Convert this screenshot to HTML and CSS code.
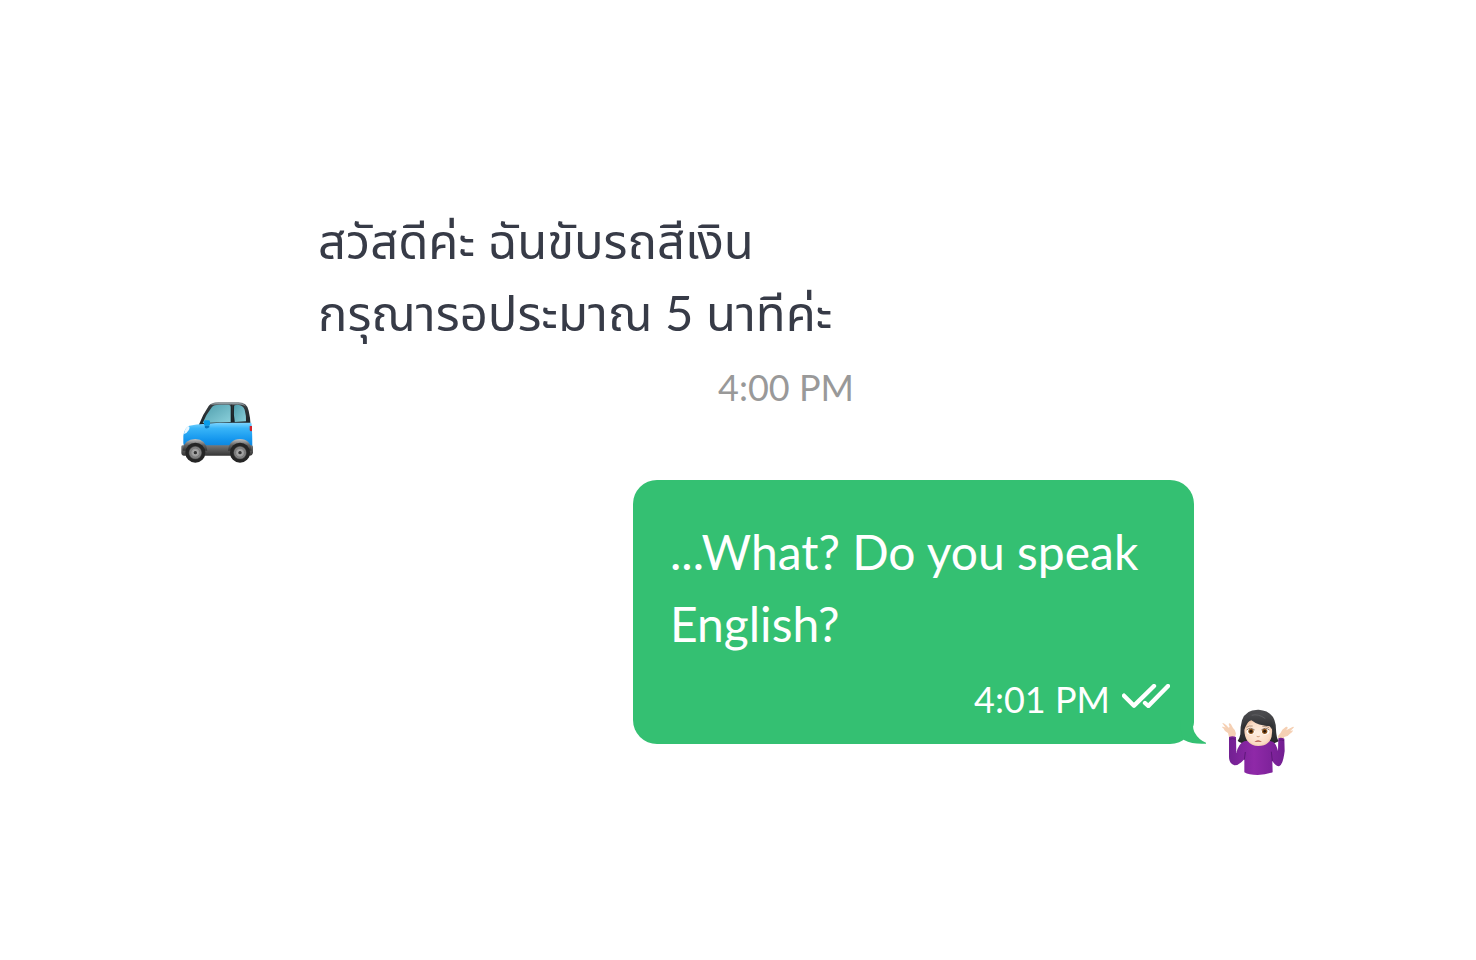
FILE: index.html
```
<!DOCTYPE html>
<html lang="en">

<head>
    <meta charset="UTF-8">
    <meta name="viewport" content="width=device-width, initial-scale=1.0">
    <title>Chat</title>
    <link rel="stylesheet" href="styles.css">
</head>

<body>
    <main class="chat">
        <div class="row">
            <svg class="avatar" viewBox="33 18 216 216" role="img" aria-label="Driver">
                <defs>
                    <linearGradient id="car-body" x1="0" y1="0" x2="0" y2="1">
                        <stop offset="0" stop-color="#7fd6ff"/>
                        <stop offset=".2" stop-color="#39b5f8"/>
                        <stop offset=".6" stop-color="#1597ee"/>
                        <stop offset="1" stop-color="#087bd3"/>
                    </linearGradient>
                    <linearGradient id="car-glass" x1="0" y1="0" x2="1" y2="1">
                        <stop offset="0" stop-color="#4e9dac"/>
                        <stop offset="1" stop-color="#8bd0db"/>
                    </linearGradient>
                    <linearGradient id="car-roof" x1="0" y1="0" x2="0" y2="1">
                        <stop offset="0" stop-color="#a5adb0"/>
                        <stop offset=".15" stop-color="#343a3d"/>
                        <stop offset="1" stop-color="#1c2226"/>
                    </linearGradient>
                    <linearGradient id="car-bumper" x1="0" y1="0" x2="0" y2="1">
                        <stop offset="0" stop-color="#777"/>
                        <stop offset="1" stop-color="#353535"/>
                    </linearGradient>
                    <linearGradient id="car-arch" x1="0" y1="0" x2="0" y2="1">
                        <stop offset="0" stop-color="#c4c4c4"/>
                        <stop offset=".5" stop-color="#666"/>
                        <stop offset="1" stop-color="#333"/>
                    </linearGradient>
                    <radialGradient id="car-hub">
                        <stop offset="0" stop-color="#555"/>
                        <stop offset=".3" stop-color="#aaa"/>
                        <stop offset=".8" stop-color="#858585"/>
                        <stop offset="1" stop-color="#444"/>
                    </radialGradient>
                </defs>
                <path fill="url(#car-roof)" d="M86 106Q97 75 116 48Q124 37 145 36H205Q231 37 236 62Q241 82 242 108Z"/>
                <path fill="url(#car-body)" d="M44 181Q38 158 40 137Q43 113 58 107Q78 102 106 101L150 98H244Q247 115 247 181Z"/>
                <path fill="#8d999e" d="M121 46Q127 40 144 39H205Q222 40 230 52Q223 44 205 43H145Q129 42 121 46Z"/>
                <path fill="url(#car-glass)" d="M98 99Q109 72 126 51Q131 44 149 44H175Q182 44 182 52V96Z"/>
                <path fill="url(#car-glass)" d="M192 49Q192 44 202 44Q220 45 224 59Q229 77 228 94L194 96Q190 73 192 49Z"/>
                <path fill="none" stroke="#111b20" stroke-width="2" d="M185 44V97M191 46Q189 76 192 97"/>
                <rect x="102" y="91" width="18" height="16" rx="4" fill="#079be9"/>
                <path fill="#0876bd" d="M104 107H118V112Q112 117 105 114Z"/>
                <path fill="#e9f7ff" d="M42 132Q44 114 56 109Q61 112 56 121Q51 130 42 132Z"/>
                <path fill="#cf252f" d="M239 108H246V123Q240 125 239 120Z"/>
                <path fill="url(#car-bumper)" d="M34 170Q34 166 39 166H244Q249 167 249 171V189Q247 197 240 197H42Q34 196 34 188Z"/>
                <path fill="url(#car-arch)" d="M38 179Q43 147 76 147Q108 148 112 182H39Z"/>
                <path fill="url(#car-arch)" d="M174 182Q178 147 210 147Q242 148 245 182Z"/>
                <circle cx="76" cy="188" r="30" fill="#252525"/>
                <circle cx="76" cy="188" r="20" fill="url(#car-hub)"/>
                <circle cx="76" cy="188" r="14" fill="none" stroke="#777" stroke-width="3"/>
                <circle cx="76" cy="188" r="5" fill="#333"/>
                <circle cx="210" cy="188" r="30" fill="#252525"/>
                <circle cx="210" cy="188" r="20" fill="url(#car-hub)"/>
                <circle cx="210" cy="188" r="14" fill="none" stroke="#777" stroke-width="3"/>
                <circle cx="210" cy="188" r="5" fill="#333"/>
            </svg>
            <div class="bubble">
                <p class="text thai" lang="th">สวัสดีค่ะ ฉันขับรถสีเงิน<br>กรุณารอประมาณ 5 นาทีค่ะ</p>
                <div class="meta"><time datetime="16:00">4:00 PM</time></div>
            </div>
        </div>

        <div class="row me">
            <div class="bubble">
                <p class="text">...What? Do you speak English?</p>
                <div class="meta">
                    <time datetime="16:01">4:01 PM</time>
                    <svg class="ticks" viewBox="66 72 144 72" role="img" aria-label="Read">
                        <path d="M72 107L102 137L162 78M135 129L145 138L204 78"/>
                    </svg>
                </div>
                <svg class="tail" viewBox="240 180 78 72" aria-hidden="true">
                    <path d="M240 180H282V186Q276 201 283 216Q296 240 318 248V251Q280 254 252 240Q240 220 240 180Z"/>
                </svg>
            </div>
            <svg class="avatar" viewBox="36 22 216 216" role="img" aria-label="Me">
                <defs>
                    <linearGradient id="shirt" x1="0" y1="0" x2="1" y2="0">
                        <stop offset="0" stop-color="#722092"/>
                        <stop offset=".45" stop-color="#8f29a8"/>
                        <stop offset="1" stop-color="#721e91"/>
                    </linearGradient>
                    <radialGradient id="face" cx=".5" cy=".5" r=".6">
                        <stop offset="0" stop-color="#fff0e2"/>
                        <stop offset=".7" stop-color="#fbdcc5"/>
                        <stop offset="1" stop-color="#e7b898"/>
                    </radialGradient>
                    <linearGradient id="hair" x1="0" y1="0" x2="0" y2="1">
                        <stop offset="0" stop-color="#4d4d50"/>
                        <stop offset="1" stop-color="#242527"/>
                    </linearGradient>
                </defs>
                <path fill="url(#hair)" d="M146 27Q106 26 96 59Q91 76 91 101Q88 116 83 121Q94 131 127 130H165Q192 132 206 122Q199 111 198 87Q198 31 146 27Z"/>
                <path fill="#f5d0b4" d="M57 109L54 97Q44 94 40 83L35 79Q39 76 47 81L37 68Q38 65 49 74L56 81L59 79L56 70Q58 65 63 71L69 82Q80 91 77 102L75 109Z"/>
                <path fill="#f5d0b4" d="M205 113L204 106Q212 98 217 87L228 78Q235 77 232 84L228 89L249 78Q254 78 250 82L241 91L249 89Q249 95 240 99Q234 108 222 109V114Z"/>
                <path fill="url(#shirt)" d="M57 109Q67 105 78 109L79 157Q86 128 103 122Q119 117 143 121Q171 116 190 124Q198 129 204 151L205 113Q213 109 223 114L224 151Q219 193 207 197Q199 198 187 181L188 215Q165 223 143 223Q116 223 103 215V176Q86 195 73 194Q57 188 57 169Z"/>
                <path fill="none" stroke="#5d1879" stroke-width="3" d="M103 177L106 154M187 181L184 153M58 116Q67 112 77 116M206 119Q214 116 222 120"/>
                <path fill="url(#face)" d="M103 84Q106 64 124 59Q144 75 179 77L186 86Q190 134 145 136Q102 133 103 84Z"/>
                <path fill="url(#hair)" d="M123 54Q147 74 184 77Q191 80 189 94Q196 76 180 52Q160 31 132 39Q101 43 98 80L102 88Q112 64 123 54Z"/>
                <path fill="none" stroke="#66676a" stroke-width="2" d="M125 44Q145 38 166 54"/>
                <g fill="#fff">
                    <ellipse cx="122" cy="92" rx="12" ry="10"/>
                    <ellipse cx="166" cy="92" rx="12" ry="10"/>
                </g>
                <g fill="#8c531a">
                    <circle cx="123" cy="92" r="8"/>
                    <circle cx="164" cy="92" r="8"/>
                </g>
                <g fill="#25170c">
                    <circle cx="123" cy="92" r="4"/>
                    <circle cx="164" cy="92" r="4"/>
                </g>
                <path fill="none" stroke="#5c3b27" stroke-width="2" d="M110 88Q121 78 134 88M154 88Q166 78 178 88"/>
                <path fill="none" stroke="#8b705e" stroke-width="2" d="M109 80Q117 74 128 76M157 77Q168 75 177 81"/>
                <path fill="none" stroke="#d59e7c" stroke-width="3" d="M140 107Q144 110 149 107"/>
                <path fill="#b65f50" d="M133 124Q144 114 156 124Q145 122 133 124Z"/>
            </svg>
        </div>
    </main>
</body>

</html>
```
FILE: styles.css
```
body {
    margin: 0;
    font-family: Lato, 'Noto Sans Thai', 'Noto Sans', sans-serif;
    background-color: #fff;
}

.chat {
    display: flex;
    flex-direction: column;
    gap: 48px;
    padding: 168px 182px 168px 181px;
}

.row {
    display: flex;
    align-items: flex-end;
    gap: 28px;
}

.me {
    justify-content: flex-end;
}

.avatar {
    flex: none;
    width: 72px;
    height: 72px;
    margin-bottom: -36px;
}

.bubble {
    position: relative;
    box-sizing: border-box;
    padding: 36px 24px 18px 37px;
    border-radius: 24px;
    color: #373b47;
    min-width: 597px;
}

.me .bubble {
    width: 51%;
    min-width: 0;
    max-width: 561px;
    color: #fff;
    background-color: #34c072;
}

.text {
    margin: 0;
    font-size: 48px;
    line-height: 72px;
}

.thai {
    font-size: 49px;
}

.meta {
    display: flex;
    align-items: center;
    justify-content: flex-end;
    gap: 12px;
    margin-top: 12px;
    font-size: 36px;
    line-height: 54px;
    color: #999;
}

.me .meta {
    color: #fff;
}

.ticks {
    width: 48px;
    height: 24px;
    margin-bottom: 6px;
    fill: none;
    stroke: currentColor;
    stroke-width: 13;
    stroke-linecap: round;
    stroke-linejoin: round;
}

.tail {
    position: absolute;
    right: -12px;
    bottom: 0;
    width: 26px;
    height: 24px;
    fill: #34c072;
}
```
